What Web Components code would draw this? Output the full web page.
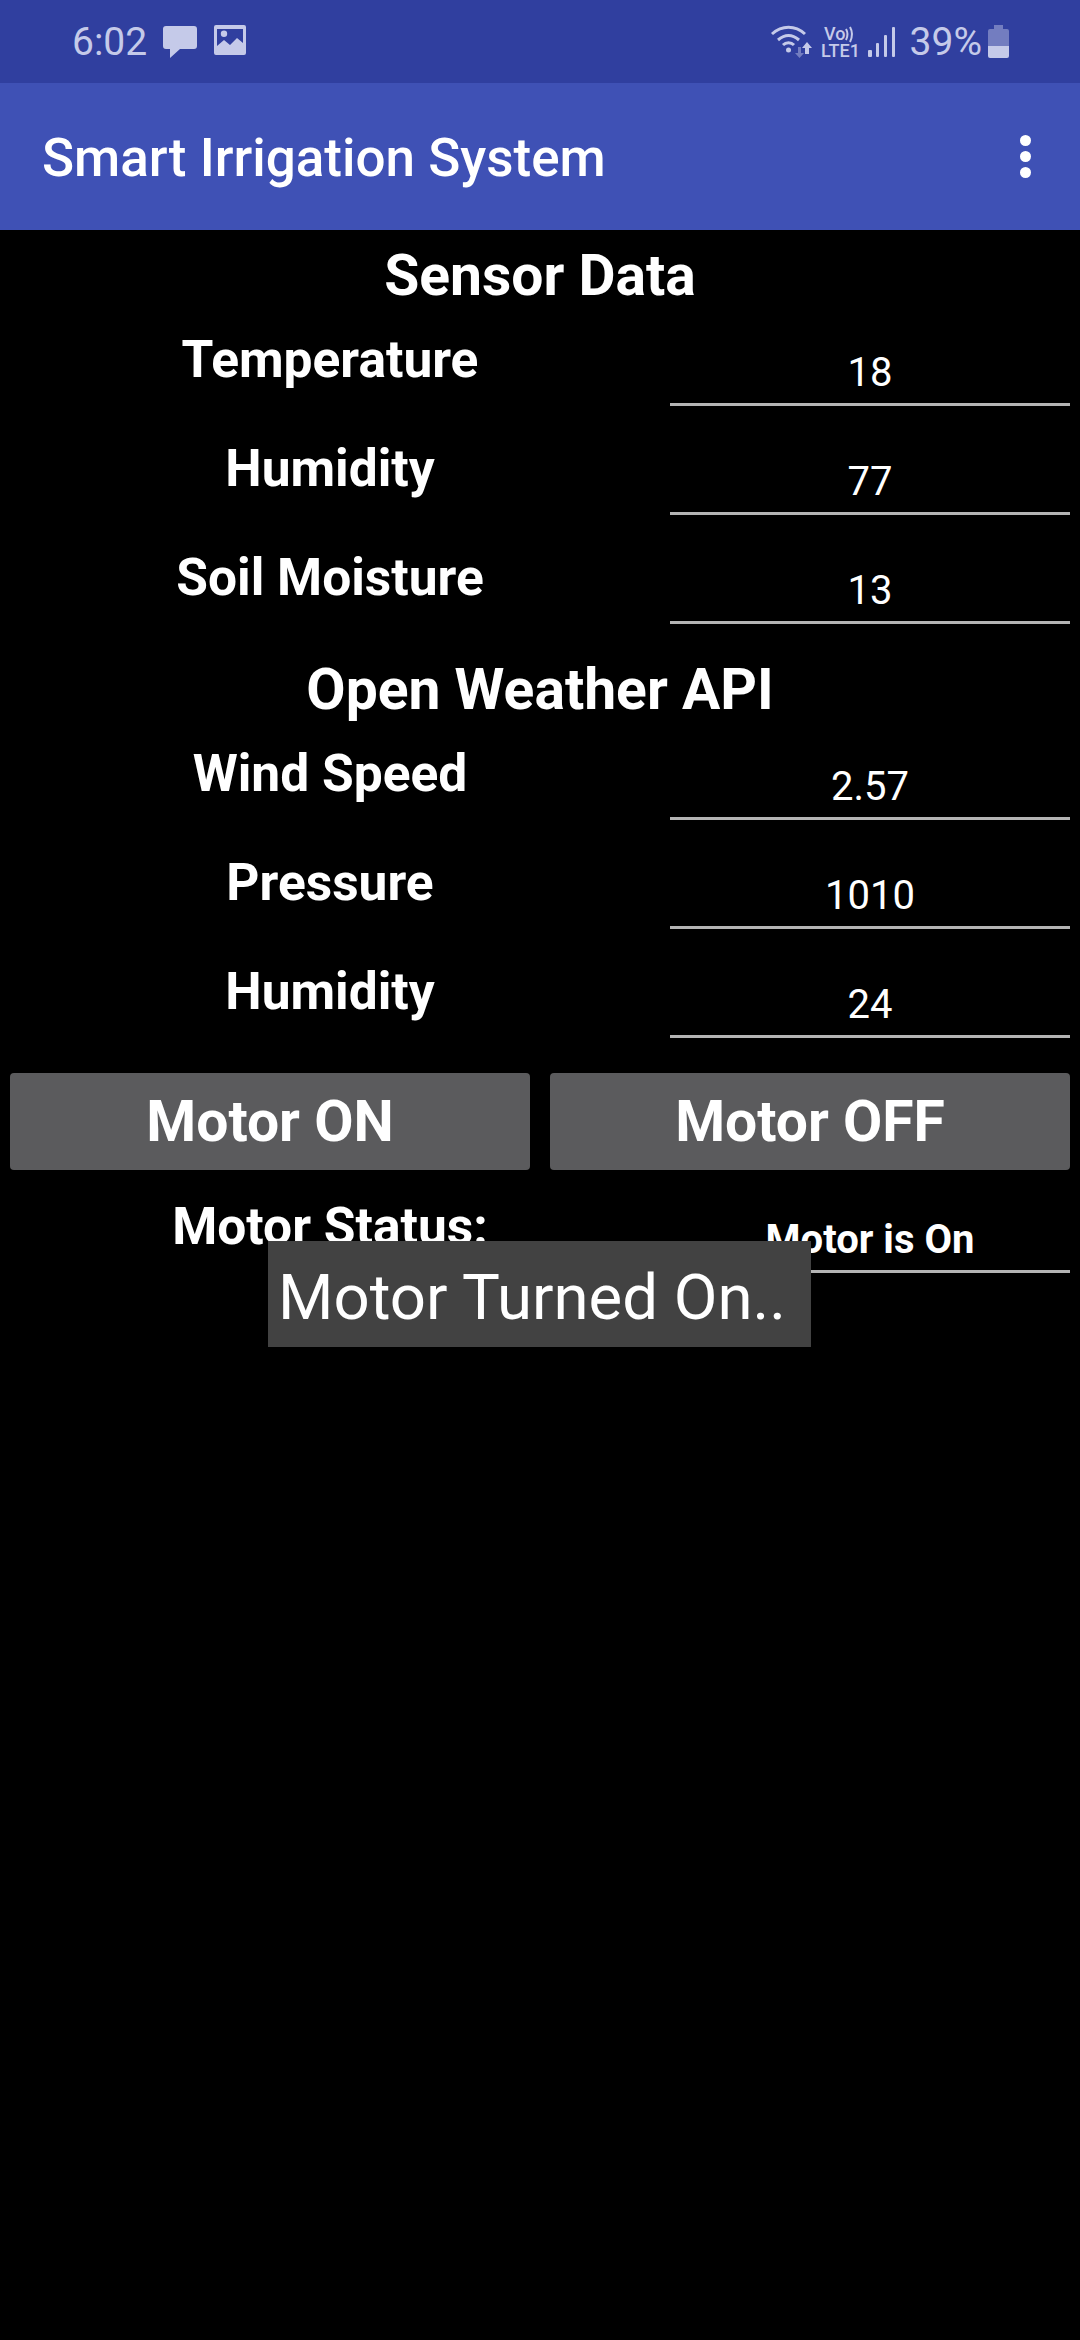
<!DOCTYPE html>
<html>
<head>
<meta charset="utf-8">
<title>Smart Irrigation System</title>
<style>
  html, body { margin: 0; background: #000; }
  body { width: 1080px; height: 2340px; position: relative; overflow: hidden; font-family: Roboto, "Liberation Sans", sans-serif; color: #fff; }
  main { display: block; padding: 0 10px; }
</style>
</head>
<body>
<status-bar></status-bar>
<app-bar>Smart Irrigation System</app-bar>
<main>
  <section-title style="--top: 14px">Sensor Data</section-title>
  <value-row label="Temperature" value="18"></value-row>
  <value-row label="Humidity" value="77"></value-row>
  <value-row label="Soil Moisture" value="13"></value-row>
  <section-title style="--top: 23px">Open Weather API</section-title>
  <value-row label="Wind Speed" value="2.57"></value-row>
  <value-row label="Pressure" value="1010"></value-row>
  <value-row label="Humidity" value="24"></value-row>
  <button-pair></button-pair>
  <value-row label="Motor Status:" value="Motor is On" small></value-row>
</main>
<toast-message>Motor Turned On..</toast-message>

<script>
class StatusBar extends HTMLElement {
  constructor() {
    super();
    this.attachShadow({ mode: 'open' }).innerHTML = `
    <style>
      :host { display: flex; align-items: center; height: 83px; background: #303f9f; color: #c5cae9; font-size: 39px; padding: 0 71px 0 72px; box-sizing: border-box; }
      .left, .right { display: flex; align-items: center; }
      .right { margin-left: auto; }
      svg { display: block; fill: currentColor; overflow: visible; }
    </style>
    <div class="left">
      <span>6:02</span>
      <svg width="34" height="33" viewBox="0 0 34 33" style="margin:2px 0 0 16px"><path d="M3 0h28a3 3 0 0 1 3 3v17a3 3 0 0 1-3 3H17L7 32v-9H3a3 3 0 0 1-3-3V3a3 3 0 0 1 3-3z"/></svg>
      <svg width="32" height="30" viewBox="0 0 32 30" style="margin:-3px 0 0 17px"><path fill-rule="evenodd" d="M2 0h28a2 2 0 0 1 2 2v26a2 2 0 0 1-2 2H2a2 2 0 0 1-2-2V2a2 2 0 0 1 2-2zM3 4v17l7-6 6 5 7-7 6 5V4zM10 5.500a3.200 3.200 0 1 1 0 6.400 3.200 3.200 0 0 1 0-6.400z"/></svg>
    </div>
    <div class="right">
      <svg width="41" height="34" viewBox="0 0 41 34">
        <path d="M1 9C11 0 24 0 34 9" fill="none" stroke="currentColor" stroke-width="3"/>
        <path d="M7 15C14 9 21 9 28 15" fill="none" stroke="currentColor" stroke-width="3"/>
        <path d="M12 20C15 17 20 17 23 20" fill="none" stroke="currentColor" stroke-width="3"/>
        <circle cx="17.500" cy="25" r="2.500"/>
        <path d="M24 28h3v-6h3v6h3l-4.500 5z" opacity=".45"/>
        <path d="M34 23h-3l5-6 5 6h-3v6h-4z"/>
      </svg>
      <svg width="38" height="34" viewBox="0 0 38 34" style="margin-left:9px">
        <text x="3" y="15" font-family="Roboto" font-weight="500" font-size="18">Vo</text>
        <path d="M25 4q3 5 0 11M29 2q4 7 0 15" fill="none" stroke="currentColor" stroke-width="2"/>
        <text x="0" y="32" font-family="Roboto" font-weight="500" font-size="18">LTE1</text>
      </svg>
      <svg width="28" height="32" viewBox="0 0 28 32" style="margin-left:9px">
        <rect x="0" y="24" width="4" height="7" rx="1"/><rect x="8" y="17" width="3" height="14" rx="1"/><rect x="16" y="9" width="3" height="22" rx="1"/><rect x="24" y="1" width="3" height="30" rx="1"/>
      </svg>
      <span style="margin-left:14px">39%</span>
      <svg width="21" height="33" viewBox="0 0 21 33" style="margin-left:6px">
        <path d="M6 0h9v4h4a2 2 0 0 1 2 2v15H0V6a2 2 0 0 1 2-2h4z" opacity=".45"/>
        <path d="M0 21h21v10a2 2 0 0 1-2 2H2a2 2 0 0 1-2-2z"/>
      </svg>
    </div>`;
  }
}

class AppBar extends HTMLElement {
  constructor() {
    super();
    this.attachShadow({ mode: 'open' }).innerHTML = `
    <style>
      :host { display: flex; align-items: center; height: 147px; background: #3f51b5; color: #fff; font-size: 53px; font-weight: 500; padding: 2px 49px 0 42px; box-sizing: border-box; }
      .more { margin-left: auto; display: flex; flex-direction: column; gap: 5px; margin-top: -2px; }
      .more i { display: block; width: 11px; height: 11px; border-radius: 50%; background: #fff; }
    </style>
    <slot></slot>
    <div class="more"><i></i><i></i><i></i></div>`;
  }
}

class SectionTitle extends HTMLElement {
  constructor() {
    super();
    this.attachShadow({ mode: 'open' }).innerHTML = `
    <style>
      :host { display: block; text-align: center; font-size: 57px; font-weight: 700; line-height: 64px; padding-top: var(--top, 0); }
    </style>
    <slot></slot>`;
  }
}

class ValueRow extends HTMLElement {
  constructor() {
    super();
    const small = this.hasAttribute('small');
    this.attachShadow({ mode: 'open' }).innerHTML = `
    <style>
      :host { display: grid; grid-template-columns: 640px 400px; column-gap: 20px; height: 109px; align-items: start; }
      .label { text-align: center; font-size: 51.500px; font-weight: 700; line-height: 60px; padding-top: 22px; }
      .value { height: 55px; padding-top: 40px; border-bottom: 3px solid #b4b4b4; text-align: center; font-size: 40px; line-height: 50px; }
      .small { font-size: 40px; font-weight: 700; }
    </style>
    <div class="label"></div>
    <div class="value${small ? ' small' : ''}"></div>`;
    this.shadowRoot.querySelector('.label').textContent = this.getAttribute('label');
    this.shadowRoot.querySelector('.value').textContent = this.getAttribute('value');
  }
}

class ButtonPair extends HTMLElement {
  constructor() {
    super();
    this.attachShadow({ mode: 'open' }).innerHTML = `
    <style>
      :host { display: grid; grid-template-columns: 520px 520px; column-gap: 20px; margin: 24px 0 5px; }
      div { height: 97px; background: #5b5b5d; border-radius: 4px; display: flex; align-items: center; justify-content: center; font-size: 57px; font-weight: 700; }
    </style>
    <div>Motor ON</div>
    <div>Motor OFF</div>`;
  }
}

class ToastMessage extends HTMLElement {
  constructor() {
    super();
    this.attachShadow({ mode: 'open' }).innerHTML = `
    <style>
      :host { position: absolute; left: 268px; top: 1241px; width: 543px; height: 106px; background: #424242; color: #fff; font-size: 63.500px; line-height: 113px; padding-left: 10px; box-sizing: border-box; white-space: nowrap; }
    </style>
    <slot></slot>`;
  }
}

customElements.define('status-bar', StatusBar);
customElements.define('app-bar', AppBar);
customElements.define('section-title', SectionTitle);
customElements.define('value-row', ValueRow);
customElements.define('button-pair', ButtonPair);
customElements.define('toast-message', ToastMessage);
</script>
</body>
</html>
